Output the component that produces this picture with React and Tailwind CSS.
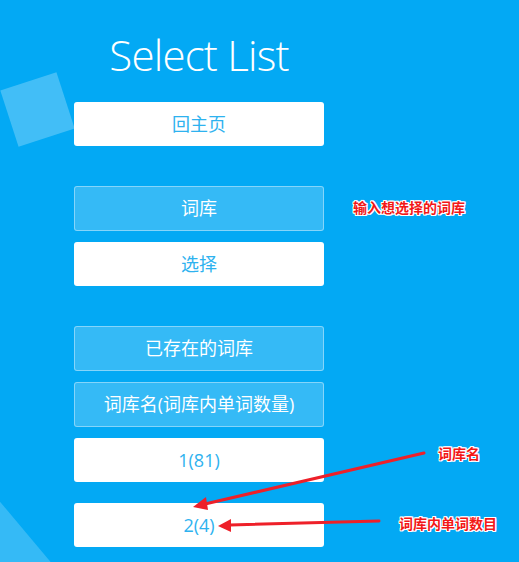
const outline = "[text-shadow:1px_0_0_#fff,-1px_0_0_#fff,0_1px_0_#fff,0_-1px_0_#fff,1px_1px_0_#fff,-1px_-1px_0_#fff,1px_-1px_0_#fff,-1px_1px_0_#fff]";

const Btn = ({ children, solid, className = "" }) => (
    <div
        className={
            "flex items-center justify-center rounded-[3px] text-[18px] " +
            (solid
                ? "h-[44px] bg-white text-[#2eb2ef] "
                : "h-[45px] bg-white/20 border border-white/40 text-white ") +
            className
        }
    >
        {children}
    </div>
);

const Note = ({ children, className }) => (
    <span className={"absolute text-[14px] font-bold leading-none text-[#f21818] " + outline + " " + className}>
        {children}
    </span>
);

export default function App() {
    return (
        <div className="relative w-[519px] h-[562px] overflow-hidden bg-[#03a9f4] font-['Open_Sans','Noto_Sans_CJK_SC',sans-serif]">
            {/* decorative squares */}
            <div className="absolute left-[8px] top-[80px] w-[59px] h-[59px] bg-white/25 -rotate-[18deg]" />
            <div className="absolute -left-[68px] top-[508px] w-[100px] h-[100px] bg-white/20 rotate-[50deg]" />

            <div className="relative ml-[74px] w-[250px] flex flex-col">
                <h1 className="h-[102px] pt-[28px] text-center text-[42px] leading-[54px] font-light text-white tracking-[-0.8px]">
                    Select List
                </h1>
                <Btn solid>回主页</Btn>
                <Btn className="mt-[40px]">词库</Btn>
                <Btn solid className="mt-[11px]">选择</Btn>
                <Btn className="mt-[40px]">已存在的词库</Btn>
                <Btn className="mt-[11px]">词库名(词库内单词数量)</Btn>
                <Btn solid className="mt-[11px]">1(81)</Btn>
                <Btn solid className="mt-[21px]">2(4)</Btn>
            </div>

            <Note className="left-[353px] top-[201px]">输入想选择的词库</Note>
            <Note className="left-[438px] top-[447px]">词库名</Note>
            <Note className="left-[399px] top-[517px]">词库内单词数目</Note>

            <svg className="absolute inset-0" width="519" height="562">
                <line x1="424" y1="453" x2="205" y2="504" stroke="#ee2029" strokeWidth="3" strokeLinecap="round" />
                <polygon points="193,507 206,497 208,510" fill="#ee2029" />
                <line x1="379" y1="521" x2="230" y2="525" stroke="#ee2029" strokeWidth="3" strokeLinecap="round" />
                <polygon points="218,526 231,519 231,532" fill="#ee2029" />
            </svg>
        </div>
    );
}
